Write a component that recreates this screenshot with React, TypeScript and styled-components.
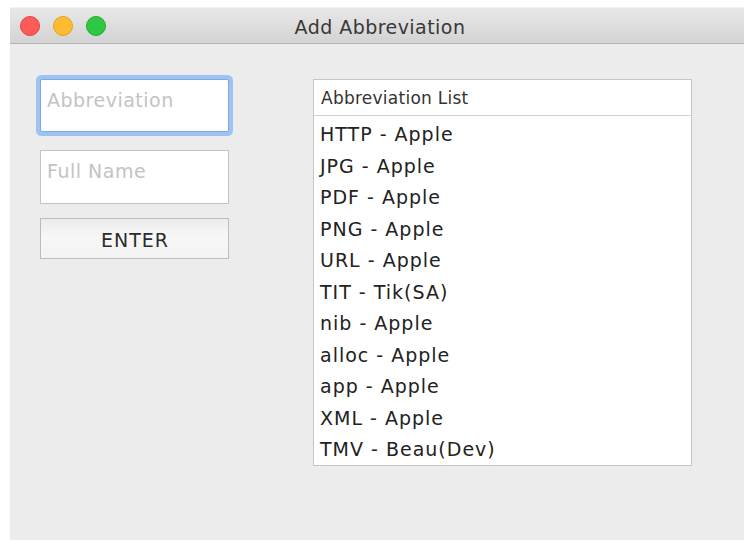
import React from "react";
import styled, { createGlobalStyle } from "styled-components";

const Global = createGlobalStyle`
  html, body {
    margin: 0;
    padding: 0;
    background: #ffffff;
    overflow: hidden;
  }
  body {
    font-family: "DejaVu Sans", "Liberation Sans", sans-serif;
  }
  * { box-sizing: border-box; }
`;

const Window = styled.div`
  margin: 7px 0 0 10px;
  width: 740px;
  height: 533px;
  background: #ececec;
  display: flex;
  flex-direction: column;
`;

const TitleBar = styled.div`
  position: relative;
  height: 37px;
  flex: none;
  display: flex;
  align-items: center;
  justify-content: center;
  background: linear-gradient(#e8e8e8, #d3d3d3);
  border-top: 1px solid #f2f2f2;
  border-bottom: 1px solid #b4b4b4;
`;

const Lights = styled.div`
  position: absolute;
  left: 10px;
  top: 8px;
  display: flex;
  gap: 13px;
`;

const Light = styled.span<{ $fill: string; $edge: string }>`
  width: 20px;
  height: 20px;
  border-radius: 50%;
  background: ${(p) => p.$fill};
  border: 1px solid ${(p) => p.$edge};
`;

const Title = styled.div`
  font-size: 19px;
  letter-spacing: 0.45px;
  color: #383838;
  line-height: 23px;
  padding-top: 4px;
`;

const Body = styled.div`
  display: flex;
  align-items: flex-start;
  gap: 84px;
  padding: 35px 0 0 30px;
`;

const Form = styled.div`
  width: 189px;
  display: flex;
  flex-direction: column;
`;

const Field = styled.div<{ $focused?: boolean }>`
  height: ${(p) => (p.$focused ? 53 : 54)}px;
  margin-bottom: ${(p) => (p.$focused ? 18 : 14)}px;
  background: #ffffff;
  border: 1px solid ${(p) => (p.$focused ? "#7fa9e3" : "#c4c4c4")};
  border-radius: ${(p) => (p.$focused ? 2 : 0)}px;
  box-shadow: ${(p) => (p.$focused ? "0 0 0 4px #9cc3f1" : "none")};
  padding: 9px 0 0 6px;
  font-size: 19px;
  letter-spacing: 0.5px;
  line-height: 23px;
  color: #c3c3c3;
`;

const Button = styled.div`
  height: 41px;
  border: 1px solid #bcbcbc;
  background: linear-gradient(#ebebeb, #f7f7f7 45%, #f3f3f3);
  display: flex;
  align-items: center;
  justify-content: center;
  font-size: 19px;
  letter-spacing: 1px;
  color: #2c2c2c;
  padding: 3px 0 0 1px;
`;

const List = styled.div`
  width: 379px;
  background: #ffffff;
  border: 1px solid #c6c6c6;
`;

const ListHeader = styled.div`
  height: 36px;
  border-bottom: 1px solid #d2d2d2;
  display: flex;
  align-items: center;
  padding: 1px 0 0 7px;
  font-size: 17px;
  letter-spacing: 0.25px;
  color: #333333;
`;

const Rows = styled.div`
  padding-top: 2px;
`;

const Row = styled.div`
  height: 31.5px;
  line-height: 31.5px;
  padding: 1px 0 0 6px;
  font-size: 19px;
  letter-spacing: 1px;
  color: #222222;
`;

const entries = [
  "HTTP - Apple",
  "JPG - Apple",
  "PDF - Apple",
  "PNG - Apple",
  "URL - Apple",
  "TIT - Tik(SA)",
  "nib - Apple",
  "alloc - Apple",
  "app - Apple",
  "XML - Apple",
  "TMV - Beau(Dev)",
];

export default function App() {
  return (
    <>
      <Global />
      <Window>
        <TitleBar>
          <Lights>
            <Light $fill="#fc5b57" $edge="#e0443f" />
            <Light $fill="#fdbc2f" $edge="#e0a028" />
            <Light $fill="#2fc843" $edge="#23ab33" />
          </Lights>
          <Title>Add Abbreviation</Title>
        </TitleBar>
        <Body>
          <Form>
            <Field $focused>Abbreviation</Field>
            <Field>Full Name</Field>
            <Button>ENTER</Button>
          </Form>
          <List>
            <ListHeader>Abbreviation List</ListHeader>
            <Rows>
              {entries.map((e) => (
                <Row key={e}>{e}</Row>
              ))}
            </Rows>
          </List>
        </Body>
      </Window>
    </>
  );
}
